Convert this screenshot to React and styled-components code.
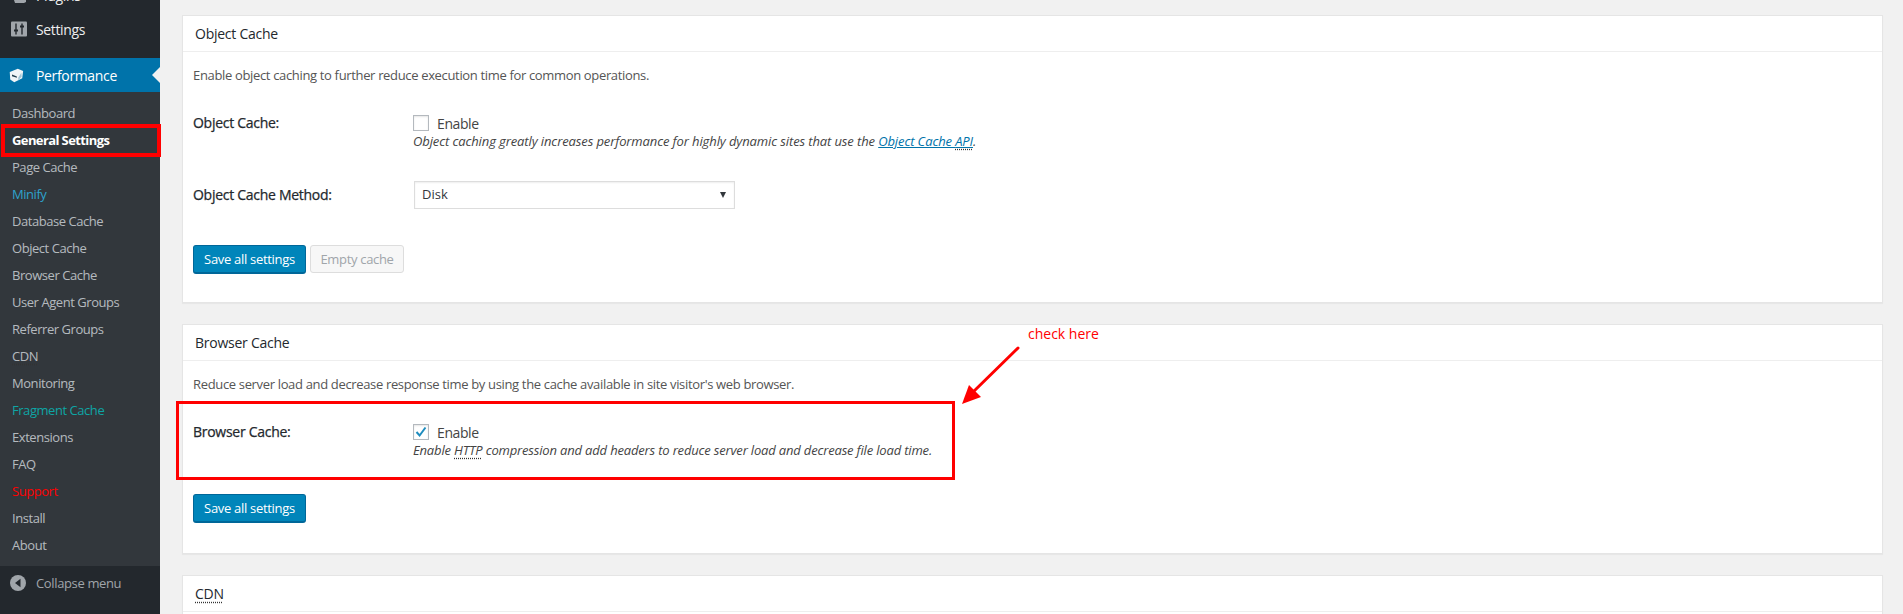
import React from "react";
import styled, { createGlobalStyle } from "styled-components";

const GlobalStyle = createGlobalStyle`
  html, body {
    margin: 0;
    padding: 0;
    height: 100%;
    background: #f1f1f1;
    overflow: hidden;
  }
  body {
    font-family: "Open Sans", "Noto Sans", sans-serif;
    font-size: 13px;
    color: #444;
  }
  * { box-sizing: border-box; }
`;

const Page = styled.div`
  position: relative;
  display: flex;
  width: 1903px;
  height: 614px;
  overflow: hidden;
`;

const Sidebar = styled.nav`
  flex: 0 0 160px;
  display: flex;
  flex-direction: column;
  background: #23282d;
  height: 614px;
  overflow: hidden;
`;

const TopMenu = styled.div`
  margin-top: -22px;
  margin-bottom: 12px;
`;

const TopItem = styled.div`
  position: relative;
  display: flex;
  align-items: center;
  height: 34px;
  padding-left: 11px;
  gap: 9px;
  font-size: 14px;
  letter-spacing: -0.35px;
  color: ${(p) => (p.$active ? "#fff" : "#eee")};
  background: ${(p) => (p.$active ? "#0073aa" : "transparent")};
`;

const IconSlot = styled.span`
  display: flex;
  align-items: center;
  justify-content: center;
  flex: 0 0 16px;
  width: 16px;
  height: 16px;
  transform: translateX(${(p) => p.$shift || 0}px);
`;

const Caret = styled.span`
  position: absolute;
  right: 0;
  top: 9px;
  border: 8px solid transparent;
  border-right-color: #f1f1f1;
  border-left-width: 0;
`;

const SubMenu = styled.div`
  flex: 1;
  background: #32373c;
  padding: 8px 0 0;
`;

const SubItem = styled.div`
  height: 27px;
  line-height: 27px;
  padding-left: 12px;
  font-size: 13px;
  letter-spacing: ${(p) => (p.$current ? "-0.6px" : "-0.45px")};
  font-weight: ${(p) => (p.$current ? 700 : 400)};
  color: ${(p) => p.$color || "rgba(240,245,250,0.7)"};
`;

const Collapse = styled.div`
  flex: 0 0 48px;
  display: flex;
  align-items: center;
  gap: 10px;
  padding: 0 0 14px 10px;
  font-size: 13px;
  letter-spacing: -0.36px;
  color: #a0a5aa;
`;

const Main = styled.main`
  flex: 1;
  padding: 15px 20px 0 22px;
  display: flex;
  flex-direction: column;
  gap: 21px;
`;

const Panel = styled.section`
  flex: 0 0 auto;
  height: ${(p) => p.$height}px;
  background: #fff;
  border: 1px solid #e5e5e5;
  box-shadow: 0 1px 1px rgba(0, 0, 0, 0.04);
`;

const PanelHead = styled.h3`
  margin: 0;
  height: 36px;
  line-height: 35px;
  padding-left: 12px;
  font-size: 14px;
  font-weight: 400;
  letter-spacing: -0.25px;
  color: #23282d;
  border-bottom: 1px solid #eee;
`;

const PanelBody = styled.div`
  padding: 11px 10px 0;
`;

const Lead = styled.p`
  margin: 0;
  line-height: 24px;
  font-size: 13px;
  letter-spacing: -0.34px;
  color: #555;
`;

const FormRow = styled.div`
  display: grid;
  grid-template-columns: 220px 1fr;
  margin-top: ${(p) => p.$top}px;
`;

const RowLabel = styled.div`
  font-size: 14px;
  font-weight: 400;
  letter-spacing: -0.28px;
  line-height: 20px;
  color: #23282d;
  -webkit-text-stroke: 0.25px #23282d;
  margin-top: ${(p) => p.$top || 0}px;
`;

const CheckLine = styled.label`
  display: flex;
  align-items: center;
  gap: 8px;
  height: 20px;
  font-size: 14px;
  letter-spacing: -0.4px;
  color: #444;
`;

const CheckBox = styled.span`
  display: flex;
  align-items: center;
  justify-content: center;
  width: 16px;
  height: 16px;
  background: #fff;
  border: 1px solid #b4b9be;
  box-shadow: inset 0 1px 2px rgba(0, 0, 0, 0.1);
`;

const Note = styled.div`
  font-size: 13px;
  line-height: 17px;
  font-style: italic;
  letter-spacing: ${(p) => p.$track}px;
  color: #444;
`;

const DocLink = styled.a`
  color: #0073aa;
  text-decoration: underline;
`;

const Abbr = styled.abbr`
  text-decoration: underline dotted #333;
  text-underline-offset: 3px;
`;

const SelectBox = styled.div`
  position: relative;
  width: 321px;
  height: 28px;
  margin-left: 1px;
  line-height: 25px;
  padding-left: 7px;
  background: #fff;
  border: 1px solid #ddd;
  font-size: 13px;
  color: #32373c;
  box-shadow: inset 0 1px 2px rgba(0, 0, 0, 0.07);
`;

const SelectArrow = styled.span`
  position: absolute;
  right: 8px;
  top: 10px;
  border-style: solid;
  border-width: 6px 3.5px 0;
  border-color: #32373c transparent transparent;
`;

const Actions = styled.div`
  display: flex;
  align-items: flex-start;
  gap: 4px;
  margin-top: ${(p) => p.$top}px;
`;

const SaveButton = styled.button`
  width: 113px;
  height: 29px;
  padding: 0;
  font-family: inherit;
  font-size: 13px;
  letter-spacing: -0.3px;
  color: #fff;
  background: #0085ba;
  border: 1px solid #006799;
  border-bottom-width: 2px;
  border-radius: 3px;
`;

const EmptyButton = styled.button`
  width: 94px;
  height: 28px;
  padding: 0;
  font-family: inherit;
  font-size: 13px;
  letter-spacing: -0.32px;
  color: #a0a5aa;
  background: #f7f7f7;
  border: 1px solid #ddd;
  border-radius: 3px;
`;

const MarkBox = styled.div`
  position: absolute;
  left: ${(p) => p.$x}px;
  top: ${(p) => p.$y}px;
  width: ${(p) => p.$w}px;
  height: ${(p) => p.$h}px;
  border: ${(p) => p.$thick}px solid #f00;
  pointer-events: none;
`;

const CheckHere = styled.span`
  position: absolute;
  left: 1028px;
  top: 325px;
  font-size: 14px;
  line-height: 18px;
  color: #f00;
`;

const ArrowMark = styled.svg`
  position: absolute;
  left: 955px;
  top: 340px;
  width: 70px;
  height: 70px;
`;

const subItems = [
  { label: "Dashboard" },
  { label: "General Settings", current: true, color: "#fff" },
  { label: "Page Cache" },
  { label: "Minify", color: "#2ea2cc" },
  { label: "Database Cache" },
  { label: "Object Cache" },
  { label: "Browser Cache" },
  { label: "User Agent Groups" },
  { label: "Referrer Groups" },
  { label: <Abbr>CDN</Abbr> },
  { label: "Monitoring" },
  { label: "Fragment Cache", color: "#0ea5a5" },
  { label: "Extensions" },
  { label: "FAQ" },
  { label: "Support", color: "#f00" },
  { label: "Install" },
  { label: "About" },
];

const SettingsIcon = () => (
  <svg width="16" height="16" viewBox="0 0 16 16">
    <rect width="16" height="15" y="0.5" fill="#a0a5aa" rx="1" />
    <path d="M5 2.5v11M11 2.5v11" stroke="#23282d" strokeWidth="1.4" />
    <path d="M3 9.5h4M9 5.5h4" stroke="#23282d" strokeWidth="1.8" />
  </svg>
);

const CubeIcon = () => (
  <svg width="18" height="17" viewBox="0 0 18 17">
    <path d="M2 4.5 11 1l6 2.5-1 8L7 16 2.5 13z" fill="#f1f5f7" />
    <path d="M4.5 7.5 10 9.5l0 1.6-5.5-1.8z" fill="#23404f" />
    <path d="M11.5 11 15 5.5l.3 4.5-3.8 4z" fill="#9fc4d6" />
  </svg>
);

const PluginIcon = () => (
  <svg width="16" height="16" viewBox="0 0 16 16">
    <path d="M3 3c0-2 2-3 5-3h5l2 1v4l-2 1H8L4 6z" fill="#a0a5aa" transform="translate(0 10)" />
  </svg>
);

const CollapseIcon = () => (
  <svg width="16" height="16" viewBox="0 0 16 16">
    <circle cx="8" cy="8" r="8" fill="#a0a5aa" />
    <path d="M10.5 3.8v8.4L5 8z" fill="#23282d" />
  </svg>
);

export default function App() {
  return (
    <Page>
      <GlobalStyle />
      <Sidebar>
        <TopMenu>
          <TopItem>
            <IconSlot>
              <PluginIcon />
            </IconSlot>
            Plugins
          </TopItem>
          <TopItem>
            <IconSlot>
              <SettingsIcon />
            </IconSlot>
            Settings
          </TopItem>
        </TopMenu>
        <TopItem $active>
          <IconSlot $shift={-3}>
            <CubeIcon />
          </IconSlot>
          Performance
          <Caret />
        </TopItem>
        <SubMenu>
          {subItems.map((item, i) => (
            <SubItem key={i} $current={item.current} $color={item.color}>
              {item.label}
            </SubItem>
          ))}
        </SubMenu>
        <Collapse>
          <CollapseIcon />
          Collapse menu
        </Collapse>
      </Sidebar>

      <Main>
        <Panel $height={288}>
          <PanelHead>Object Cache</PanelHead>
          <PanelBody>
            <Lead>Enable object caching to further reduce execution time for common operations.</Lead>
            <FormRow $top={26}>
              <RowLabel>Object Cache:</RowLabel>
              <div>
                <CheckLine>
                  <CheckBox />
                  Enable
                </CheckLine>
                <Note $track={-0.11}>
                  Object caching greatly increases performance for highly dynamic sites that use the{" "}
                  <DocLink>
                    Object Cache <Abbr>API</Abbr>
                  </DocLink>
                  .
                </Note>
              </div>
            </FormRow>
            <FormRow $top={31}>
              <RowLabel $top={4}>Object Cache Method:</RowLabel>
              <SelectBox>
                Disk
                <SelectArrow />
              </SelectBox>
            </FormRow>
            <Actions $top={36}>
              <SaveButton>Save all settings</SaveButton>
              <EmptyButton>Empty cache</EmptyButton>
            </Actions>
          </PanelBody>
        </Panel>

        <Panel $height={230}>
          <PanelHead>Browser Cache</PanelHead>
          <PanelBody>
            <Lead>Reduce server load and decrease response time by using the cache available in site visitor's web browser.</Lead>
            <FormRow $top={26}>
              <RowLabel>Browser Cache:</RowLabel>
              <div>
                <CheckLine>
                  <CheckBox>
                    <svg width="14" height="14" viewBox="0 0 14 14">
                      <path d="M2.5 7 5.6 10.5 11.5 2.5" fill="none" stroke="#1e8cbe" strokeWidth="2" />
                    </svg>
                  </CheckBox>
                  Enable
                </CheckLine>
                <Note $track={-0.17}>
                  Enable <Abbr>HTTP</Abbr> compression and add headers to reduce server load and decrease file load time.
                </Note>
              </div>
            </FormRow>
            <Actions $top={35}>
              <SaveButton>Save all settings</SaveButton>
            </Actions>
          </PanelBody>
        </Panel>

        <Panel $height={120}>
          <PanelHead>
            <Abbr>CDN</Abbr>
          </PanelHead>
        </Panel>
      </Main>

      <MarkBox $x={1} $y={124} $w={160} $h={33} $thick={4} />
      <MarkBox $x={176} $y={401} $w={779} $h={79} $thick={3} />
      <CheckHere>check here</CheckHere>
      <ArrowMark viewBox="0 0 70 70">
        <path d="M63 8 16 54" stroke="#f00" strokeWidth="3" strokeLinecap="round" />
        <path d="M7 64 14 45 26 57z" fill="#f00" />
      </ArrowMark>
    </Page>
  );
}
